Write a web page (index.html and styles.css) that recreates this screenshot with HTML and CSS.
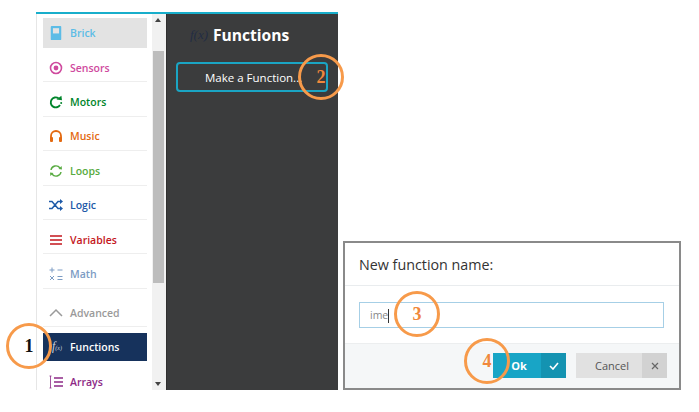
FILE: index.html
```html
<!DOCTYPE html>
<html lang="en">
<head>
    <meta charset="UTF-8">
    <title>Make a Function</title>
    <link rel="stylesheet" href="styles.css">
</head>
<body>
    <div class="editor">
        <div class="toolbox">
            <ul class="cats">
                <li class="cat cat-brick selected">
                    <svg class="ico" viewBox="0 0 14 16"><rect x="1" width="12" height="16" rx="1" fill="currentColor"/><rect x="3.5" y="2.5" width="7" height="6" fill="#e3e3e3"/></svg>
                    <span>Brick</span>
                </li>
                <li class="cat cat-sensors">
                    <svg class="ico" viewBox="0 0 14 14"><circle cx="7" cy="7" r="5.5" fill="none" stroke="currentColor" stroke-width="1.6"/><circle cx="7" cy="7" r="2.4" fill="currentColor"/></svg>
                    <span>Sensors</span>
                </li>
                <li class="cat cat-motors">
                    <svg class="ico" viewBox="0 0 14 14"><path d="M9.5 3.2A5 5 0 1 0 11 10" fill="none" stroke="currentColor" stroke-width="1.9"/><path d="M7.5 4.6 13 5.2 12.4 .8z" fill="currentColor"/><circle cx="12.2" cy="8" r="1" fill="currentColor"/></svg>
                    <span>Motors</span>
                </li>
                <li class="cat cat-music">
                    <svg class="ico" viewBox="0 0 14 14"><path d="M2 9V7a5 5 0 0 1 10 0v2" fill="none" stroke="currentColor" stroke-width="1.8"/><rect x="1" y="8" width="3" height="5" rx="1" fill="currentColor"/><rect x="10" y="8" width="3" height="5" rx="1" fill="currentColor"/></svg>
                    <span>Music</span>
                </li>
                <li class="cat cat-loops">
                    <svg class="ico" viewBox="0 0 14 14"><path d="M2 6a5 5 0 0 1 9-2M12 8a5 5 0 0 1-9 2" fill="none" stroke="currentColor" stroke-width="1.4"/><path d="M9.5 5 13 5.5 12.6 2zM4.5 9 1 8.5 1.4 12z" fill="currentColor"/></svg>
                    <span>Loops</span>
                </li>
                <li class="cat cat-logic">
                    <svg class="ico" viewBox="0 0 14 14"><path d="M0 3.5h3l6 7h2M0 10.5h3l6-7h2" fill="none" stroke="currentColor" stroke-width="1.5"/><path d="M11 1l3 2.5-3 2.5zM11 8l3 2.5-3 2.5z" fill="currentColor"/></svg>
                    <span>Logic</span>
                </li>
                <li class="cat cat-variables">
                    <svg class="ico" viewBox="0 0 14 14"><path d="M1 3h12M1 7h12M1 11h12" stroke="currentColor" stroke-width="1.7"/></svg>
                    <span>Variables</span>
                </li>
                <li class="cat cat-math">
                    <svg class="ico" viewBox="0 0 14 14"><path d="M3 .5v5M.5 3h5M8.5 3h5M1 9l4 4M5 9l-4 4M8.5 9.5h5M8.5 12.5h5" fill="none" stroke="currentColor" stroke-width="1"/></svg>
                    <span>Math</span>
                </li>
                <li class="cat cat-advanced">
                    <svg class="ico" viewBox="0 0 14 14"><path d="M1 10l6-6 6 6" fill="none" stroke="currentColor" stroke-width="1.5"/></svg>
                    <span>Advanced</span>
                </li>
                <li class="cat cat-functions">
                    <span class="fx">f<small>(x)</small></span>
                    <span>Functions</span>
                </li>
                <li class="cat cat-arrays">
                    <svg class="ico" viewBox="0 0 14 14"><path d="M5 3h9M5 7h9M5 11h9" stroke="currentColor" stroke-width="1.4"/><path d="M1.5 1v12M.5 1h2M.5 13h2" fill="none" stroke="currentColor" stroke-width=".8"/></svg>
                    <span>Arrays</span>
                </li>
            </ul>
            <div class="scrollbar">
                <span class="arrow arrow-up"></span>
                <div class="thumb"></div>
                <span class="arrow arrow-down"></span>
            </div>
        </div>
        <div class="flyout">
            <div class="flyout-title">
                <span class="flyout-fx">f(x)</span>
                <h2>Functions</h2>
            </div>
            <button class="make-btn">Make a Function...</button>
        </div>
    </div>

    <div class="dialog">
        <div class="dialog-head">New function name:</div>
        <div class="dialog-body">
            <div class="name-input">ime<span class="caret"></span></div>
        </div>
        <div class="dialog-foot">
            <div class="btn btn-ok">
                <span class="btn-label">Ok</span>
                <span class="btn-ico">
                    <svg viewBox="0 0 10 8" width="10" height="8"><path d="M1 4l3 3 5-6" fill="none" stroke="#fff" stroke-width="1.6"/></svg>
                </span>
            </div>
            <div class="btn btn-cancel">
                <span class="btn-label">Cancel</span>
                <span class="btn-ico">
                    <svg viewBox="0 0 8 8" width="8" height="8"><path d="M1 1l6 6M7 1l-6 6" fill="none" stroke="#666" stroke-width="1.2"/></svg>
                </span>
            </div>
        </div>
    </div>

    <div class="step step-1">1</div>
    <div class="step step-2">2</div>
    <div class="step step-3">3</div>
    <div class="step step-4">4</div>
</body>
</html>
```
FILE: styles.css
```css
html, body {
    margin: 0;
    padding: 0;
    height: 100%;
    overflow: hidden;
    background: white;
    font-family: "Open Sans", Arial, sans-serif;
}

/* editor window */
.editor {
    position: absolute;
    left: 36px;
    top: 12px;
    width: 302px;
    height: 378px;
    display: flex;
    border-top: 2px solid #18aecb;
    box-sizing: border-box;
    overflow: hidden;
}
.toolbox {
    width: 130px;
    display: flex;
    border-left: 1px solid #e6e6e6;
    box-sizing: border-box;
    background: white;
}
.cats {
    list-style: none;
    margin: 0;
    padding: 4px 5px 0 6px;
    width: 116px;
    box-sizing: border-box;
}
.cat {
    display: flex;
    align-items: center;
    height: 34.4px;
    box-sizing: border-box;
    padding: 6px 0 0 6px;
    font-size: 10.5px;
    font-weight: 600;
    border-bottom: 1px solid #eeeeee;
}
.cat .ico {
    width: 14px;
    height: 14px;
    margin-right: 7px;
    flex: none;
}
.selected {
    height: 30px;
    padding-top: 0;
    background: #e3e3e3;
    border-bottom: none;
}
.cat-brick { color: #5cbce6; }
.cat-sensors { color: #cf4a9e; }
.cat-motors { color: #00852b; }
.cat-music { color: #e36a12; }
.cat-loops { color: #58ab41; }
.cat-logic { color: #1e5aa8; }
.cat-variables { color: #c4161c; }
.cat-math { color: #7c9cc4; }
.cat-advanced {
    color: #9a9a9a;
    height: 38px;
    padding-top: 12px;
    margin-bottom: 6px;
}
.cat-functions {
    height: 28px;
    padding-top: 0;
    color: white;
    background: #16325c;
    border-bottom: none;
}
.fx {
    width: 14px;
    margin-right: 7px;
    padding-left: 3px;
    box-sizing: border-box;
    font: italic 12px "Liberation Serif", serif;
    color: #c9d1de;
}
.fx small {
    font-size: 6px;
}
.cat-arrays {
    color: #8d2a86;
    border-bottom: none;
    padding-top: 4px;
    margin-top: 2px;
}

.scrollbar {
    width: 14px;
    background: #f1f1f1;
    display: flex;
    flex-direction: column;
    align-items: center;
    position: relative;
}
.thumb {
    width: 11px;
    height: 232px;
    margin: 37px 2px 0 0;
    background: #bdbdbd;
}
.arrow {
    position: absolute;
    left: 3px;
    width: 0;
    height: 0;
    border-left: 3.5px solid transparent;
    border-right: 3.5px solid transparent;
}
.arrow-up {
    top: 4px;
    border-bottom: 4px solid #444;
}
.arrow-down {
    bottom: 4px;
    border-top: 4px solid #444;
}

/* dark flyout */
.flyout {
    flex: 1;
    background: #3b3c3d;
    border-left: 1px solid #2f2f2f;
    color: white;
}
.flyout-title {
    display: flex;
    align-items: center;
    height: 38px;
    margin-top: 2px;
    padding-left: 23px;
}
.flyout-fx {
    width: 23px;
    font: italic 13px "Liberation Serif", serif;
    color: #222c44;
}
.flyout-title h2 {
    margin: 0;
    font-size: 15.6px;
    font-weight: 700;
}
.make-btn {
    display: block;
    width: 152px;
    height: 30px;
    margin: 8px 0 0 9px;
    padding: 0 0 0 27px;
    background: #3b3c3d;
    border: 2px solid #1aa5c4;
    border-radius: 4px;
    color: white;
    font-family: inherit;
    font-size: 11.5px;
    font-weight: 400;
    text-align: left;
    white-space: nowrap;
    box-sizing: border-box;
}

/* name prompt */
.dialog {
    position: absolute;
    left: 343px;
    top: 241px;
    width: 338px;
    height: 149px;
    box-sizing: border-box;
    border: 2px solid #8a8a8a;
    background: white;
    display: flex;
    flex-direction: column;
}
.dialog-head {
    height: 43px;
    box-sizing: border-box;
    padding: 12px 0 0 14px;
    font-size: 14.3px;
    color: #333;
    border-bottom: 1px solid #e9ecee;
}
.dialog-body {
    height: 57px;
    box-sizing: border-box;
    padding: 16px 15px 0 14px;
}
.name-input {
    height: 26px;
    box-sizing: border-box;
    border: 1px solid #a6cfe6;
    padding-left: 10px;
    line-height: 24px;
    font-size: 10.5px;
    color: #888;
}
.caret {
    display: inline-block;
    width: 1px;
    height: 14px;
    vertical-align: middle;
    background: #333;
}
.dialog-foot {
    flex: 1;
    display: flex;
    justify-content: flex-end;
    gap: 10px;
    padding: 9px 12px 0 0;
    background: #f5f7f8;
    border-top: 1px solid #eceeef;
}
.btn {
    display: flex;
    height: 25px;
    font-size: 11px;
}
.btn-label {
    flex: 1;
    line-height: 25px;
    text-align: center;
}
.btn-ico {
    display: flex;
    align-items: center;
    justify-content: center;
    width: 25px;
}
.btn-ok {
    width: 73px;
    color: white;
    font-weight: 700;
    background: #18a5c6;
}
.btn-ok .btn-label {
    padding-left: 4px;
}
.btn-ok .btn-ico {
    background: #1493b1;
}
.btn-cancel {
    width: 91px;
    color: #555;
    font-weight: 400;
    background: #e1e1e1;
}
.btn-cancel .btn-label {
    padding-left: 6px;
}
.btn-cancel .btn-ico {
    background: #d2d2d2;
}

/* numbered annotations */
.step {
    position: absolute;
    width: 46px;
    height: 46px;
    box-sizing: border-box;
    border: 3px solid #f79a4a;
    border-radius: 50%;
    display: flex;
    align-items: center;
    justify-content: center;
    font: 700 18px "Liberation Serif", serif;
    color: #f0883c;
}
.step-1 { left: 6px; top: 323px; color: #111; }
.step-2 { left: 298px; top: 54px; }
.step-3 { left: 394px; top: 291px; }
.step-4 { left: 464px; top: 338px; }
```
